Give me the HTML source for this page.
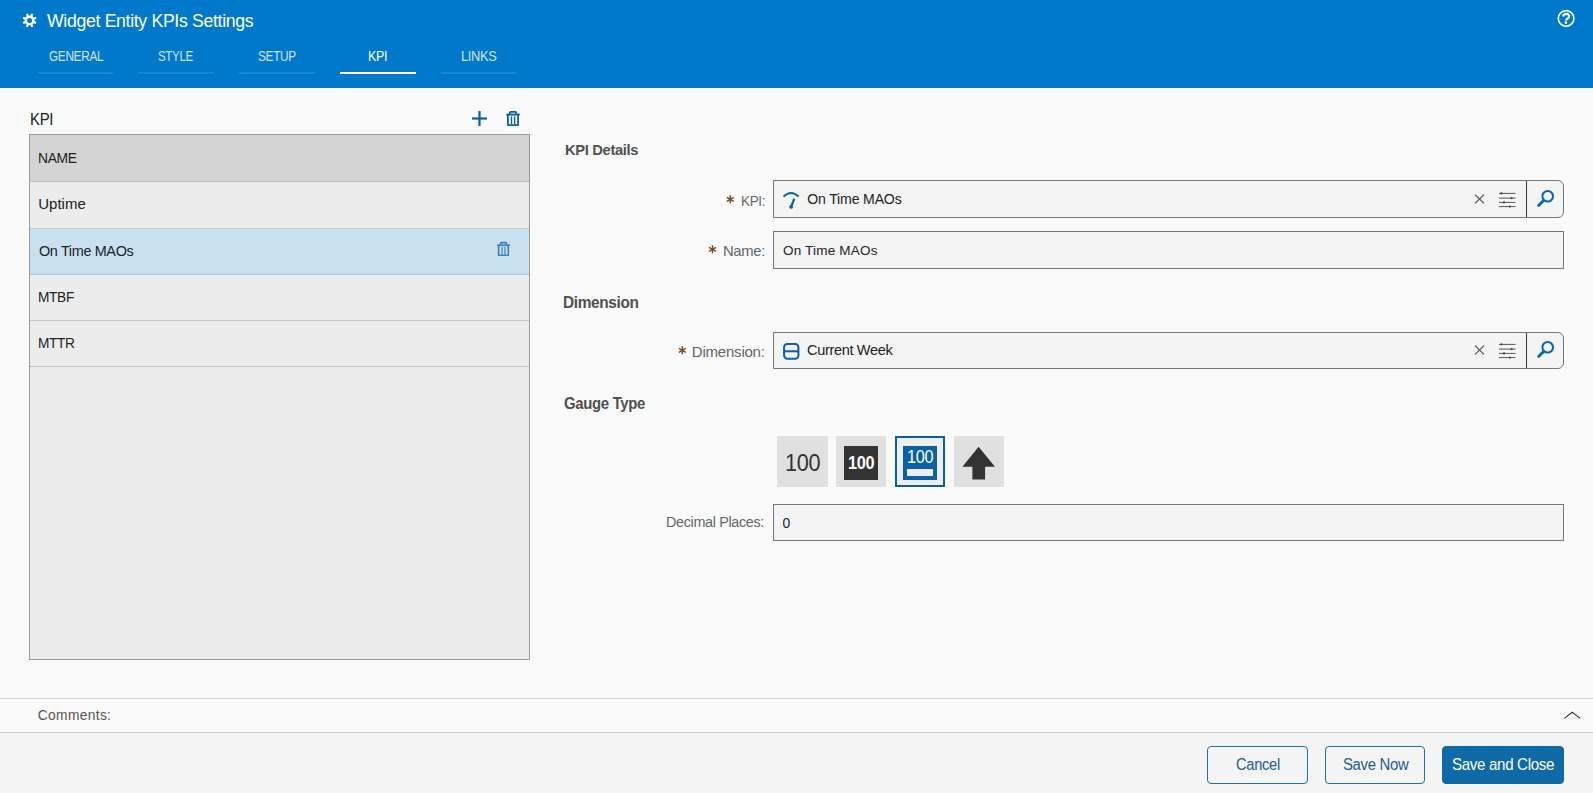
<!DOCTYPE html>
<html><head><meta charset="utf-8">
<style>
*{box-sizing:border-box;margin:0;padding:0}
html,body{width:1593px;height:793px;overflow:hidden;background:#fafafa;font-family:"Liberation Sans",sans-serif;position:relative}
.t{position:absolute;white-space:nowrap;line-height:1.1172}
.b{position:absolute}
.ov{position:absolute;left:0;top:0}
.tab{position:absolute;top:72px;width:76px;height:2px;background:#1a87d4;box-shadow:0 1px 0 rgba(0,0,0,0.05)}
.row{position:absolute;left:30px;width:499px;height:1px;background:#c8c8c8}
.inp{position:absolute;left:773px;width:791px;background:#f4f4f4;border:1px solid #787878}
.gb{position:absolute;top:436px;width:51px;height:51px;background:#e0e0e0}
.btn{position:absolute;top:746px;height:38px;border:1px solid #1f70b0;border-radius:4px;background:#f4f4f4}
</style></head><body>
<div class="b" style="left:0;top:0;width:1593px;height:88px;background:#0079ca"></div>
<div class="tab" style="left:38px;width:75px"></div>
<div class="tab" style="left:138px"></div>
<div class="tab" style="left:239px"></div>
<div class="tab" style="left:340px;background:#fff"></div>
<div class="tab" style="left:441px;width:75px"></div>

<div class="b" style="left:29px;top:134px;width:501px;height:526px;border:1px solid #9a9a9a;background:#ececec"></div>
<div class="b" style="left:30px;top:135px;width:499px;height:46px;background:#d4d4d4"></div>
<div class="row" style="top:181px;background:#bdbdbd"></div>
<div class="row" style="top:228px"></div>
<div class="b" style="left:30px;top:229px;width:499px;height:45px;background:#c8e0f0"></div>
<div class="row" style="top:274px;background:#a8c4d8"></div>
<div class="row" style="top:320px"></div>
<div class="row" style="top:366px"></div>

<div class="inp" style="top:180px;height:38px;border-radius:0 6px 6px 0"></div>
<div class="b" style="left:1526px;top:181px;width:1px;height:36px;background:#333"></div>
<div class="inp" style="top:231px;height:38px"></div>
<div class="inp" style="top:332px;height:37px;border-radius:0 6px 6px 0"></div>
<div class="b" style="left:1526px;top:333px;width:1px;height:35px;background:#333"></div>
<div class="inp" style="top:504px;height:37px"></div>

<div class="gb" style="left:777px"></div>
<div class="gb" style="left:836px;width:50px"></div>
<div class="b" style="left:844px;top:446px;width:34px;height:34px;background:#333"></div>
<div class="gb" style="left:895px;width:50px;background:#eee;border:2px solid #0a5fa3"></div>
<div class="b" style="left:903px;top:446px;width:34px;height:34px;background:#0a62a6"></div>
<div class="b" style="left:907px;top:469px;width:26px;height:7px;background:#eee"></div>
<div class="gb" style="left:954px;width:50px"></div>

<div class="b" style="left:0;top:698px;width:1593px;height:35px;border-top:1px solid #cfcfcf;border-bottom:1px solid #cfcfcf;background:#fafafa"></div>
<div class="b" style="left:0;top:733px;width:1593px;height:60px;background:#f4f4f4"></div>

<div class="btn" style="left:1207px;width:101px"></div>
<div class="btn" style="left:1325px;width:100px"></div>
<div class="btn" style="left:1442px;width:122px;background:#0e6aa6;border-color:#0e6aa6"></div>
<svg class="ov" width="1593" height="793" viewBox="0 0 1593 793">
<path fill="#fff" fill-rule="evenodd" d="M30.55,15.44 L31.31,13.51 L33.26,14.32 L32.44,16.22 L33.78,17.56 L35.68,16.74 L36.49,18.69 L34.56,19.45 L34.56,21.35 L36.49,22.11 L35.68,24.06 L33.78,23.24 L32.44,24.58 L33.26,26.48 L31.31,27.29 L30.55,25.36 L28.65,25.36 L27.89,27.29 L25.94,26.48 L26.76,24.58 L25.42,23.24 L23.52,24.06 L22.71,22.11 L24.64,21.35 L24.64,19.45 L22.71,18.69 L23.52,16.74 L25.42,17.56 L26.76,16.22 L25.94,14.32 L27.89,13.51 L28.65,15.44 Z M32.1,20.4 A2.5,2.5 0 1 0 27.1,20.4 A2.5,2.5 0 1 0 32.1,20.4 Z"/>
<circle cx="1566.1" cy="18.4" r="7.8" fill="none" stroke="#fff" stroke-width="1.6"/>
<path d="M1563.3,16.6 Q1563.3,13.9 1566.2,13.9 Q1569.1,13.9 1569.1,16.3 Q1569.1,17.8 1567.3,18.7 Q1566.1,19.3 1566.1,20.6" fill="none" stroke="#fff" stroke-width="2.1"/>
<circle cx="1565.9" cy="22.6" r="1.3" fill="#fff"/>
<g stroke="#0b5fa5" stroke-width="2.2"><line x1="479.5" y1="111" x2="479.5" y2="126"/><line x1="472" y1="118.5" x2="487" y2="118.5"/></g>
<g fill="none" stroke="#0b5fa5" stroke-width="1.8" stroke-linejoin="round"><path d="M509.40,114.00 L510.40,111.90 L515.70,111.90 L516.60,114.00"/><path d="M506.30,114.60 H519.80" stroke-width="1.8900000000000001"/><path d="M507.90,115.00 V125.10 H518.10 V115.00"/><path d="M511.50,116.20 V124.20 M514.60,116.20 V124.20" stroke-width="1.35"/></g>
<g fill="none" stroke="#3b7dc2" stroke-width="1.6" stroke-linejoin="round"><path d="M500.03,244.63 L500.98,242.64 L506.01,242.64 L506.87,244.63"/><path d="M497.09,245.20 H509.91" stroke-width="1.6800000000000002"/><path d="M498.61,245.58 V255.18 H508.30 V245.58"/><path d="M502.03,246.72 V254.32 M504.97,246.72 V254.32" stroke-width="1.2000000000000002"/></g>
<g stroke="#7a4520" stroke-width="1.4" stroke-linecap="butt"><line x1="730.30" y1="203.30" x2="730.30" y2="195.30"/><line x1="726.84" y1="201.30" x2="733.76" y2="197.30"/><line x1="726.84" y1="197.30" x2="733.76" y2="201.30"/><line x1="712.50" y1="253.30" x2="712.50" y2="245.30"/><line x1="709.04" y1="251.30" x2="715.96" y2="247.30"/><line x1="709.04" y1="247.30" x2="715.96" y2="251.30"/><line x1="682.30" y1="354.30" x2="682.30" y2="346.30"/><line x1="678.84" y1="352.30" x2="685.76" y2="348.30"/><line x1="678.84" y1="348.30" x2="685.76" y2="352.30"/></g>
<g fill="none" stroke="#0a5fa8" stroke-width="2"><path d="M783.5,196.5 Q791.2,189.5 798.6,196.5"/><path d="M794.3,198.6 L791.3,206.5" stroke-width="2.2"/></g>
<circle cx="791.1" cy="206.9" r="1.9" fill="#0a5fa8"/>
<g fill="none" stroke="#0a5fa8" stroke-width="2"><rect x="784.1" y="344" width="14.3" height="14.8" rx="3.2"/><line x1="784.1" y1="351.3" x2="798.4" y2="351.3"/></g>
<g stroke="#555" stroke-width="1.3"><line x1="1475" y1="194.6" x2="1484" y2="203.4"/><line x1="1484" y1="194.6" x2="1475" y2="203.4"/></g>
<g stroke="#555" stroke-width="1.3"><line x1="1475" y1="345.6" x2="1484" y2="354.4"/><line x1="1484" y1="345.6" x2="1475" y2="354.4"/></g>
<g stroke="#555" stroke-width="1.0"><line x1="1499" y1="193.4" x2="1515.5" y2="193.4"/><line x1="1499" y1="198.1" x2="1515.5" y2="198.1"/><line x1="1499" y1="202.4" x2="1515.5" y2="202.4"/><line x1="1499" y1="206.6" x2="1515.5" y2="206.6"/></g><g fill="#444"><circle cx="1501.5" cy="193.4" r="1.05"/><circle cx="1511.6" cy="198.1" r="1.05"/><circle cx="1504" cy="202.4" r="1.05"/><circle cx="1509.8" cy="206.6" r="1.05"/></g><g stroke="#555" stroke-width="1.0"><line x1="1499" y1="344.4" x2="1515.5" y2="344.4"/><line x1="1499" y1="349.09999999999997" x2="1515.5" y2="349.09999999999997"/><line x1="1499" y1="353.4" x2="1515.5" y2="353.4"/><line x1="1499" y1="357.59999999999997" x2="1515.5" y2="357.59999999999997"/></g><g fill="#444"><circle cx="1501.5" cy="344.4" r="1.05"/><circle cx="1511.6" cy="349.09999999999997" r="1.05"/><circle cx="1504" cy="353.4" r="1.05"/><circle cx="1509.8" cy="357.59999999999997" r="1.05"/></g><g fill="none" stroke="#0a64a8"><circle cx="1547.7" cy="196.3" r="5.3" stroke-width="2"/><line x1="1543.6" y1="200.60000000000002" x2="1538.6" y2="205.60000000000002" stroke-width="2.8" stroke-linecap="round"/></g><g fill="none" stroke="#0a64a8"><circle cx="1547.7" cy="347.3" r="5.3" stroke-width="2"/><line x1="1543.6" y1="351.6" x2="1538.6" y2="356.6" stroke-width="2.8" stroke-linecap="round"/></g><path fill="#333" d="M978.6,446.8 L995,466.7 L985.1,466.7 L985.1,479.6 L972.4,479.6 L972.4,466.7 L962.4,466.7 Z"/><path d="M1564.3,718.4 L1572.3,712.3 L1580.1,718.4" fill="none" stroke="#333" stroke-width="1.1"/></svg>
<div class="t" style="left:46.50px;top:11.36px;font-size:18.60px;letter-spacing:-0.350px;color:#fff;transform:scaleX(0.9512);transform-origin:0 0;">Widget Entity KPIs Settings</div>
<div class="t" style="left:48.50px;top:49.34px;font-size:14.10px;letter-spacing:-0.350px;color:#d2e4f3;transform:scaleX(0.8349);transform-origin:0 0;">GENERAL</div>
<div class="t" style="left:158.25px;top:49.34px;font-size:14.10px;letter-spacing:-0.350px;color:#d2e4f3;transform:scaleX(0.8147);transform-origin:0 0;">STYLE</div>
<div class="t" style="left:257.50px;top:49.34px;font-size:14.10px;letter-spacing:-0.350px;color:#d2e4f3;transform:scaleX(0.8387);transform-origin:0 0;">SETUP</div>
<div class="t" style="left:368.00px;top:49.34px;font-size:14.10px;letter-spacing:-0.350px;color:#fff;transform:scaleX(0.8852);transform-origin:0 0;">KPI</div>
<div class="t" style="left:460.50px;top:49.34px;font-size:14.10px;letter-spacing:-0.350px;color:#d2e4f3;transform:scaleX(0.9086);transform-origin:0 0;">LINKS</div>
<div class="t" style="left:29.50px;top:110.30px;font-size:17.01px;letter-spacing:-0.350px;color:#222;transform:scaleX(0.8797);transform-origin:0 0;">KPI</div>
<div class="t" style="left:38.25px;top:149.64px;font-size:14.54px;letter-spacing:-0.350px;color:#222;transform:scaleX(0.9526);transform-origin:0 0;">NAME</div>
<div class="t" style="left:38.25px;top:195.65px;font-size:14.97px;letter-spacing:0.014px;color:#222;">Uptime</div>
<div class="t" style="left:39.25px;top:243.44px;font-size:14.54px;letter-spacing:-0.350px;color:#222;transform:scaleX(0.9922);transform-origin:0 0;">On Time MAOs</div>
<div class="t" style="left:38.25px;top:288.84px;font-size:14.54px;letter-spacing:-0.350px;color:#222;transform:scaleX(0.9412);transform-origin:0 0;">MTBF</div>
<div class="t" style="left:38.25px;top:334.94px;font-size:14.54px;letter-spacing:-0.350px;color:#222;transform:scaleX(0.9411);transform-origin:0 0;">MTTR</div>
<div class="t" style="left:564.50px;top:140.62px;font-size:15.55px;letter-spacing:-0.350px;color:#505050;font-weight:bold;transform:scaleX(0.9454);transform-origin:0 0;">KPI Details</div>
<div class="t" style="left:563.00px;top:293.89px;font-size:15.70px;letter-spacing:-0.350px;color:#505050;font-weight:bold;transform:scaleX(0.9813);transform-origin:0 0;">Dimension</div>
<div class="t" style="left:564.00px;top:394.86px;font-size:15.84px;letter-spacing:-0.350px;color:#505050;font-weight:bold;transform:scaleX(0.9438);transform-origin:0 0;">Gauge Type</div>
<div class="t" style="left:740.50px;top:193.45px;font-size:14.97px;letter-spacing:-0.350px;color:#666;transform:scaleX(0.8992);transform-origin:0 0;">KPI:</div>
<div class="t" style="left:722.50px;top:243.45px;font-size:14.97px;letter-spacing:-0.350px;color:#666;transform:scaleX(0.9897);transform-origin:0 0;">Name:</div>
<div class="t" style="left:691.75px;top:344.22px;font-size:15.12px;letter-spacing:-0.263px;color:#666;">Dimension:</div>
<div class="t" style="left:666.25px;top:513.68px;font-size:14.83px;letter-spacing:-0.350px;color:#666;transform:scaleX(0.9691);transform-origin:0 0;">Decimal Places:</div>
<div class="t" style="left:807.25px;top:192.24px;font-size:14.10px;letter-spacing:-0.170px;color:#222;">On Time MAOs</div>
<div class="t" style="left:783.00px;top:243.46px;font-size:13.52px;letter-spacing:0.192px;color:#222;">On Time MAOs</div>
<div class="t" style="left:807.00px;top:341.71px;font-size:14.68px;letter-spacing:-0.350px;color:#222;transform:scaleX(0.9917);transform-origin:0 0;">Current Week</div>
<div class="t" style="left:782.50px;top:516.10px;font-size:13.81px;letter-spacing:0.000px;color:#222;">0</div>
<div class="t" style="left:37.75px;top:708.00px;font-size:13.81px;letter-spacing:0.333px;color:#555;">Comments:</div>
<div class="t" style="left:1235.50px;top:755.23px;font-size:16.42px;letter-spacing:-0.350px;color:#245b8c;transform:scaleX(0.8961);transform-origin:0 0;">Cancel</div>
<div class="t" style="left:1342.50px;top:755.23px;font-size:16.42px;letter-spacing:-0.350px;color:#245b8c;transform:scaleX(0.9076);transform-origin:0 0;">Save Now</div>
<div class="t" style="left:1452.25px;top:756.10px;font-size:16.57px;letter-spacing:-0.350px;color:#fff;transform:scaleX(0.9116);transform-origin:0 0;">Save and Close</div>
<div class="t" style="left:784.50px;top:449.95px;font-size:23.26px;letter-spacing:-0.350px;color:#333;transform:scaleX(0.9320);transform-origin:0 0;">100</div>
<div class="t" style="left:848.25px;top:453.98px;font-size:17.59px;letter-spacing:-0.350px;color:#fff;font-weight:bold;transform:scaleX(0.9254);transform-origin:0 0;">100</div>
<div class="t" style="left:906.50px;top:447.35px;font-size:18.17px;letter-spacing:-0.350px;color:#fff;transform:scaleX(0.8951);transform-origin:0 0;">100</div>
</body></html>
